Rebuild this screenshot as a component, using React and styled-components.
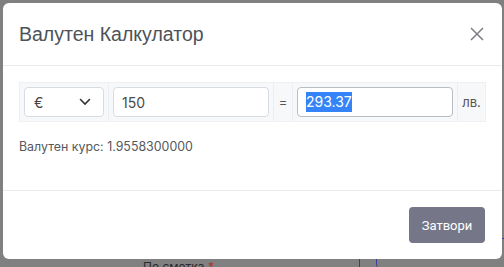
import React from 'react'
import styled, { createGlobalStyle } from 'styled-components'

const Global = createGlobalStyle`
  html, body { margin: 0; padding: 0; }
  body {
    width: 504px;
    height: 267px;
    overflow: hidden;
    font-family: Inter, "Noto Sans", sans-serif;
  }
`

const Backdrop = styled.div`
  position: relative;
  width: 504px;
  height: 267px;
  background: #808080;
  overflow: hidden;
`

const BehindLabel = styled.span`
  position: absolute;
  left: 143px;
  top: 260px;
  font-size: 12px;
  line-height: 14px;
  color: #2a2a2a;
  span { color: #a33; }
`

const BehindLine = styled.div`
  position: absolute;
  left: 359px;
  top: 250px;
  width: 1px;
  height: 20px;
  background: #3a3f7a;
`

const BehindBox = styled.div`
  position: absolute;
  left: 376px;
  top: 238px;
  width: 140px;
  height: 30px;
  border: 1px solid #3c3f9a;
  border-radius: 6px;
`

const Modal = styled.div`
  position: absolute;
  left: 3px;
  top: 3px;
  width: 499px;
  height: 256px;
  background: #fff;
  border-radius: 6px;
  display: flex;
  flex-direction: column;
  overflow: hidden;
`

const Header = styled.div`
  height: 62px;
  display: flex;
  align-items: center;
  justify-content: space-between;
  padding: 0 17px 0 16px;
  border-bottom: 1px solid #e9ecef;
`

const Title = styled.h5`
  margin: 0;
  font-family: "Liberation Sans", Arial, sans-serif;
  font-weight: 400;
  font-size: 19.5px;
  color: #4d5259;
`

const Close = styled.button`
  border: 0;
  background: none;
  padding: 0;
  width: 16px;
  height: 16px;
  display: flex;
  align-items: center;
  justify-content: center;
  color: #7a7e84;
`

const Body = styled.div`
  padding: 16px;
  height: 92px;
  border-bottom: 1px solid #e9ecef;
  box-sizing: content-box;
`

const Group = styled.div`
  display: grid;
  grid-template-columns: 89px 165px 19px 165px 1fr;
  height: 40px;
  box-sizing: border-box;
  border: 1px solid #eef0f3;
  background: #f7f8fa;
`

const Cell = styled.div`
  display: flex;
  align-items: center;
  justify-content: ${p => (p.center ? 'center' : 'stretch')};
  padding: 0 4px;
  border-right: ${p => (p.last ? '0' : '1px solid #eceef1')};
  font-size: 13px;
  color: #555;
`

const Select = styled.div`
  flex: 1;
  height: 30px;
  box-sizing: border-box;
  border: 1px solid #d8dbdf;
  border-radius: 4px;
  background: #fff;
  display: flex;
  align-items: center;
  justify-content: space-between;
  padding: 0 12px 0 9px;
  font-size: 14px;
  color: #444;
`

const Input = styled.div`
  flex: 1;
  height: 30px;
  box-sizing: border-box;
  border: 1px solid ${p => (p.focus ? '#b9bcc2' : '#d8dbdf')};
  border-radius: 4px;
  background: #fff;
  display: flex;
  align-items: center;
  padding: 0 8px;
  font-size: 14px;
  color: #4a4a4a;
`

const Selected = styled.span`
  background: #3584f7;
  color: #fff;
  line-height: 20px;
`

const Rate = styled.p`
  margin: 17px 0 0 0;
  font-size: 12.4px;
  color: #55585d;
`

const Footer = styled.div`
  flex: 1;
  display: flex;
  justify-content: flex-end;
  align-items: flex-start;
  padding: 16px 17px 16px 16px;
`

const Button = styled.button`
  width: 76px;
  height: 36px;
  border: 0;
  border-radius: 4px;
  background: #757789;
  color: #fff;
  font-family: Roboto, "Liberation Sans", sans-serif;
  font-size: 13px;
`

export default function App() {
  return (
    <>
      <Global />
      <Backdrop>
        <BehindLabel>По сметка <span>*</span></BehindLabel>
        <BehindLine />
        <BehindBox />
        <Modal>
          <Header>
            <Title>Валутен Калкулатор</Title>
            <Close aria-label="Затвори">
              <svg width="14" height="14" viewBox="0 0 14 14">
                <path d="M1 1L13 13M13 1L1 13" stroke="currentColor" strokeWidth="1.5" />
              </svg>
            </Close>
          </Header>
          <Body>
            <Group>
              <Cell>
                <Select>
                  <span>€</span>
                  <svg width="12" height="8" viewBox="0 0 12 8">
                    <path d="M1.5 1.5L6 6L10.5 1.5" fill="none" stroke="#333" strokeWidth="1.6" strokeLinecap="round" />
                  </svg>
                </Select>
              </Cell>
              <Cell>
                <Input>150</Input>
              </Cell>
              <Cell center>=</Cell>
              <Cell>
                <Input focus><Selected>293.37</Selected></Input>
              </Cell>
              <Cell center last>лв.</Cell>
            </Group>
            <Rate>Валутен курс: 1.9558300000</Rate>
          </Body>
          <Footer>
            <Button>Затвори</Button>
          </Footer>
        </Modal>
      </Backdrop>
    </>
  )
}
